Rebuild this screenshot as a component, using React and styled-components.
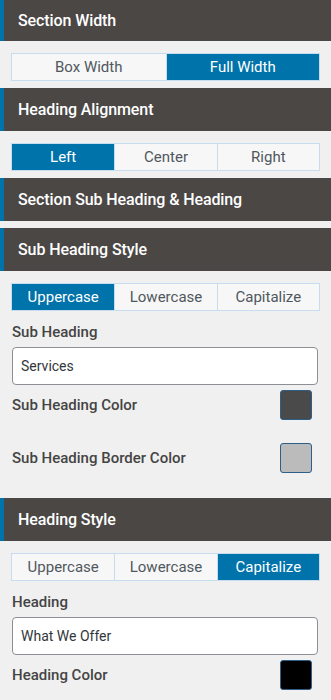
import React from "react";
import styled, { createGlobalStyle } from "styled-components";

const Global = createGlobalStyle`
  html, body { margin: 0; padding: 0; background: #f0f0f0; }
  body { font-family: Roboto, "Noto Sans", Arial, sans-serif; }
  * { box-sizing: border-box; }
`;

const Panel = styled.div`
  width: 331px;
  display: flex;
  flex-direction: column;
  background: #f0f0f0;
`;

const Header = styled.div`
  height: ${(p) => (p.$first ? 41 : 43)}px;
  margin-bottom: 7px;
  background: #4b4745;
  border-left: 4px solid #0073aa;
  padding-left: 14px;
  display: flex;
  align-items: center;
  color: #ffffff;
  font-size: 16px;
  font-weight: 500;
  letter-spacing: -0.1px;
`;

const Body = styled.div`
  display: flex;
  flex-direction: column;
  padding: 5px 11px 7px 11px;
`;

const Segmented = styled.div`
  display: grid;
  grid-template-columns: repeat(${(p) => p.$count}, 1fr);
  height: 28px;
  border: 1px solid #c7dcee;
  background: #f7f7f7;
`;

const Segment = styled.div`
  display: flex;
  align-items: center;
  justify-content: center;
  font-size: 15px;
  color: ${(p) => (p.$active ? "#ffffff" : "#50575e")};
  background: ${(p) => (p.$active ? "#0073aa" : "#f7f7f7")};
  border-left: ${(p) => (p.$index > 0 ? "1px solid #c7dcee" : "none")};
`;

const Label = styled.div`
  margin-top: 11px;
  padding-left: 1px;
  line-height: 20px;
  font-size: 15px;
  font-weight: 500;
  color: #444444;
`;

const TextInput = styled.input`
  margin: 5px 2px 0 1px;
  height: 38px;
  border: 1px solid #8c8f94;
  border-radius: 4px;
  background: #ffffff;
  padding: 0 8px;
  font-family: Roboto, "Noto Sans", Arial, sans-serif;
  font-size: 14px;
  color: #32373c;
  outline: none;
`;

const ColorRow = styled.div`
  display: flex;
  align-items: center;
  justify-content: space-between;
  margin: 5px 8px 18px 1px;
`;

const ColorLabel = styled.span`
  font-size: 15px;
  font-weight: 500;
  color: #444444;
`;

const Swatch = styled.div`
  width: 32px;
  height: 30px;
  border: 1px solid #2d5f88;
  border-radius: 3px;
  background: ${(p) => p.$color};
`;

function SegmentGroup({ options, active }) {
  return (
    <Segmented $count={options.length}>
      {options.map((o, i) => (
        <Segment key={o} $index={i} $active={i === active}>
          {o}
        </Segment>
      ))}
    </Segmented>
  );
}

const cases = ["Uppercase", "Lowercase", "Capitalize"];

export default function App() {
  return (
    <>
      <Global />
      <Panel>
        <Header $first>Section Width</Header>
        <Body>
          <SegmentGroup options={["Box Width", "Full Width"]} active={1} />
        </Body>

        <Header>Heading Alignment</Header>
        <Body>
          <SegmentGroup options={["Left", "Center", "Right"]} active={0} />
        </Body>

        <Header>Section Sub Heading &amp; Heading</Header>

        <Header>Sub Heading Style</Header>
        <Body>
          <SegmentGroup options={cases} active={0} />
          <Label>Sub Heading</Label>
          <TextInput defaultValue="Services" />
          <ColorRow>
            <ColorLabel>Sub Heading Color</ColorLabel>
            <Swatch $color="#4a4a4a" />
          </ColorRow>
          <ColorRow>
            <ColorLabel>Sub Heading Border Color</ColorLabel>
            <Swatch $color="#bbbbbb" />
          </ColorRow>
        </Body>

        <Header>Heading Style</Header>
        <Body>
          <SegmentGroup options={cases} active={2} />
          <Label>Heading</Label>
          <TextInput defaultValue="What We Offer" />
          <ColorRow>
            <ColorLabel>Heading Color</ColorLabel>
            <Swatch $color="#000000" />
          </ColorRow>
        </Body>
      </Panel>
    </>
  );
}
